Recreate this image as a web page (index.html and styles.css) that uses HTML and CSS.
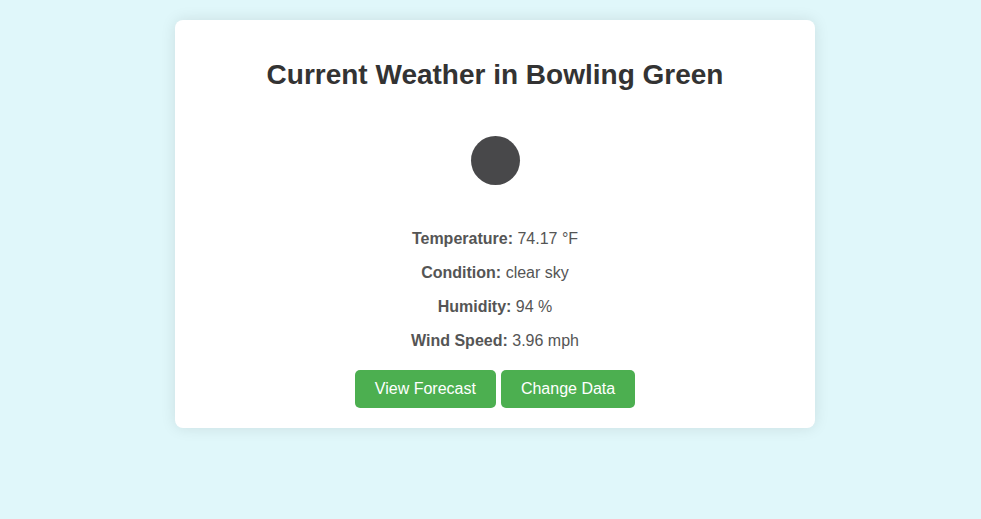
FILE: index.html
```html
<!DOCTYPE html>
<html lang="en">
<head>
<meta charset="utf-8">
<title>Current Weather</title>
<link rel="stylesheet" href="styles.css">
</head>
<body>
<div class="container">
  <h1>Current Weather in Bowling Green</h1>
  <svg class="weather-icon" width="100" height="100" viewBox="0 0 100 100" aria-hidden="true"><circle cx="50.5" cy="50.5" r="24.5" fill="#48484a"/></svg>
  <p><strong>Temperature:</strong> 74.17 °F</p>
  <p><strong>Condition:</strong> clear sky</p>
  <p><strong>Humidity:</strong> 94 %</p>
  <p><strong>Wind Speed:</strong> 3.96 mph</p>
  <div class="actions">
    <a class="btn" href="#">View Forecast</a>
    <a class="btn" href="#">Change Data</a>
  </div>
</div>
</body>
</html>
```
FILE: styles.css
```css
body {
  margin: 0;
  padding: 20px 20px 20px 29px;
  background: #e0f7fa;
  color: #333;
  font-family: "Liberation Sans", Arial, sans-serif;
  text-align: center;
}

.container {
  width: 600px;
  margin: 0 auto;
  padding: 20px;
  background: #fff;
  border-radius: 8px;
  box-shadow: 0 0 15px rgba(0, 0, 0, 0.1);
}

h1 {
  margin: 19px 0;
  font-size: 28px;
  line-height: 32px;
}

.weather-icon {
  display: block;
  margin: 0 auto 20px;
}

p {
  margin: 0 0 16px;
  font-size: 16px;
  line-height: 18px;
  color: #555;
}

.actions {
  display: flex;
  justify-content: center;
  gap: 5px;
  margin-top: 20px;
}

.btn {
  padding: 10px 20px;
  border-radius: 5px;
  background: #4caf50;
  color: #fff;
  font-size: 16px;
  line-height: 18px;
  text-decoration: none;
}
```
